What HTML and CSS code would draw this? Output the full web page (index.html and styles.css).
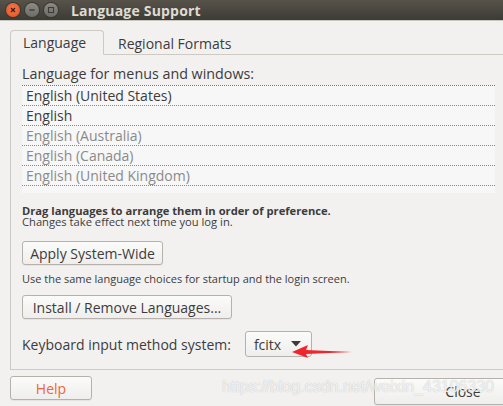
FILE: index.html
```html
<!DOCTYPE html>
<html>
<head>
<meta charset="utf-8">
<link rel="stylesheet" href="styles.css">
</head>
<body>
<div class="window">
  <div class="titlebar">
    <div class="wbtns">
      <span class="wbtn close"><svg width="12" height="12" viewBox="0 0 12 12"><path d="M4 4 L8 8 M8 4 L4 8" stroke="#3a1a0c" stroke-width="1.2"/></svg></span>
      <span class="wbtn"><svg width="12" height="12" viewBox="0 0 12 12"><path d="M3.5 6 H8.5" stroke="#3c3b37" stroke-width="1.4"/></svg></span>
      <span class="wbtn"><svg width="12" height="12" viewBox="0 0 12 12"><rect x="3.5" y="3.5" width="5" height="5" fill="none" stroke="#3c3b37" stroke-width="1.1"/></svg></span>
    </div>
    <div class="title">Language Support</div>
  </div>
  <div class="main">
    <div class="tabs">
      <div class="tab active">Language</div>
      <div class="tab">Regional Formats</div>
    </div>
    <div class="frame">
      <div class="label">Language for menus and windows:</div>
      <div class="list">
        <div class="row dark">English (United States)</div>
        <div class="row dark">English</div>
        <div class="row">English (Australia)</div>
        <div class="row">English (Canada)</div>
        <div class="row">English (United Kingdom)</div>
      </div>
      <div class="hint"><div class="hint-b">Drag languages to arrange them in order of preference.</div><div>Changes take effect next time you log in.</div></div>
      <div class="btn apply">Apply System-Wide</div>
      <div class="small">Use the same language choices for startup and the login screen.</div>
      <div class="btn install">Install / Remove Languages...</div>
      <div class="kbd">
        <span>Keyboard input method system:</span>
        <div class="combo">fcitx <svg width="10" height="6" viewBox="0 0 10 6"><path d="M0 0 H10 L5 5.5 Z" fill="#3c3c3c"/></svg></div>
      </div>
    </div>
    <div class="footer">
      <div class="btn help">Help</div>
      <div class="btn closebtn">Close</div>
    </div>
  </div>
  <svg class="arrow" width="70" height="20" viewBox="0 0 70 20"><path d="M2 9 L18 2 L16 7 L62 9 L16 11 L18 15 Z" fill="#f0242a"/></svg>
  <div class="watermark">https://blog.csdn.net/weixin_43106330</div>
</div>
</body>
</html>
```

FILE: styles.css
```css
html, body { margin: 0; padding: 0; }
body { background: #f2f1f0; font-family: "Open Sans", "DejaVu Sans", sans-serif; color: #3c3c3c; }
.window { position: relative; width: 503px; height: 406px; overflow: hidden; background: #f2f1f0; }
.titlebar { height: 20px; background: linear-gradient(#57534b, #3d3b36); display: flex; align-items: center; border-bottom: 1px solid #c9c5bf; }
.wbtns { display: flex; gap: 5px; padding-left: 6px; }
.wbtn { width: 14px; height: 14px; border-radius: 50%; background: linear-gradient(#8c8a84, #6e6c66); display: flex; align-items: center; justify-content: center; box-shadow: 0 0 0 1px #3a3833; }
.wbtn.close { background: radial-gradient(circle at 50% 40%, #f47a4e, #e0501f); }
.title { margin-left: 13px; color: #dfdbd2; font-weight: bold; font-size: 14px; letter-spacing: 0.2px; }
.main { padding: 10px 0 0 10px; }
.tabs { display: flex; height: 24px; align-items: flex-end; position: relative; z-index: 1; }
.tab { font-size: 14px; height: 23px; line-height: 23px; padding: 0 14px; color: #3c3c3c; }
.tab.active { border: 1px solid #cdc9c3; border-bottom: 1px solid #f2f1f0; border-radius: 4px 4px 0 0; padding: 0 12px; width: 68px; background: #f2f1f0; }
.frame { margin-top: -1px; border: 1px solid #cdc9c3; border-right: none; height: 314px; padding: 0 0 0 11px; }
.label { font-size: 14.3px; margin-top: 10px; height: 18px; line-height: 18px; }
.list { margin: 2px 8px 0 0; background: #f7f7f7; height: 107px; border-top: 1px dotted #777; }
.row { height: 19px; line-height: 19px; border-bottom: 1px dotted #888; padding-left: 4px; font-size: 14px; color: #8a8a8a; }
.row.dark { color: #3c3c3c; }
.hint { font-size: 11.2px; line-height: 12px; margin-top: 11px; display: flex; flex-direction: column; }
.hint-b { font-weight: bold; color: #3c3c3c; height: 12px; line-height: 14px; }
.btn { display: inline-flex; align-items: center; justify-content: center; border: 1px solid #b6b2ab; border-radius: 3px; background: linear-gradient(#fbfbfa, #efeeec); font-size: 14px; height: 22px; box-shadow: 0 1px 0 rgba(0,0,0,0.05); }
.apply { margin-top: 13px; width: 139px; }
.small { font-size: 11px; margin-top: 7px; line-height: 13px; }
.install { margin-top: 10px; width: 208px; }
.kbd { display: flex; align-items: center; margin-top: 12px; font-size: 14px; gap: 14px; }
.combo { display: flex; align-items: center; gap: 10px; border: 1px solid #b6b2ab; border-radius: 3px; background: linear-gradient(#fbfbfa, #efeeec); height: 24px; padding: 0 8px 0 8px; width: 49px; }
.footer { display: flex; padding: 6px 0 0 0; }
.help { width: 80px; color: #e9673a; flex-shrink: 0; }
.closebtn { width: 176px; flex-shrink: 0; margin-top: 2px; height: 25px; margin-left: 282px; }
.arrow { position: absolute; left: 290px; top: 343px; }
.watermark { position: absolute; left: 222px; top: 378px; font-family: "Liberation Sans", Arial, sans-serif; font-size: 16px; color: rgba(255,255,255,0.8); text-shadow: 0 0 1px rgba(150,150,150,0.7); pointer-events: none; }
```
